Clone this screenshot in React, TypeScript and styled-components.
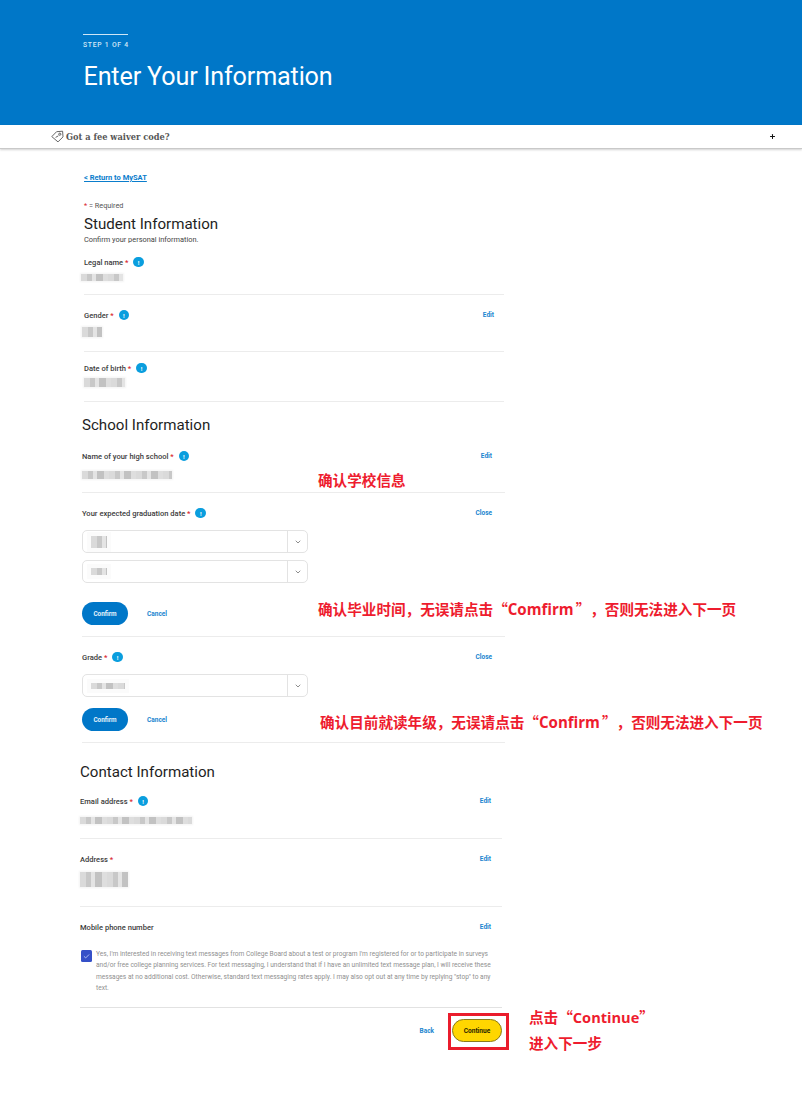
import React from 'react';
import styled, { createGlobalStyle } from 'styled-components';
import { ChevronDown, Check, Plus } from 'lucide-react';

const GlobalStyle = createGlobalStyle`
  html, body {
    margin: 0;
    padding: 0;
    background: #ffffff;
    font-family: Roboto, "Liberation Sans", sans-serif;
  }
  * {
    box-sizing: border-box;
  }
`;

const Page = styled.div`
  position: relative;
  width: 802px;
  height: 1094px;
  overflow: hidden;
  background: #ffffff;
`;

const Hero = styled.header`
  height: 125px;
  padding: 34px 0 0 83px;
  background: #0077c8;
  color: #ffffff;
`;

const StepLabel = styled.div`
  width: 45px;
  padding-top: 6px;
  border-top: 1px solid #cfe6f6;
  font-size: 6.8px;
  line-height: 8px;
  font-weight: 500;
  letter-spacing: 0.75px;
  white-space: nowrap;
  color: #d3e8f7;
`;

const HeroTitle = styled.h1`
  margin: 12px 0 0 0.5px;
  font-size: 25.15px;
  line-height: 32px;
  font-weight: 400;
  letter-spacing: -0.15px;
  white-space: nowrap;
`;

const FeeBar = styled.div`
  display: flex;
  align-items: center;
  justify-content: space-between;
  height: 24px;
  padding: 0 26px 0 51px;
  border-bottom: 1px solid #c9c9c9;
  box-shadow: 0 1px 2px rgba(0, 0, 0, 0.18);
`;

const FeeTitle = styled.div`
  display: flex;
  align-items: center;
  gap: 2px;
  font-family: "DejaVu Serif", serif;
  font-size: 8.25px;
  font-weight: 700;
  color: #565656;
`;

const Main = styled.main`
  padding-top: 24px;
`;

const Intro = styled.div`
  padding-left: 84px;
`;

const ReturnLink = styled.a`
  display: block;
  font-size: 7.5px;
  line-height: 10px;
  font-weight: 700;
  color: #0a7dcc;
  text-decoration: underline;
`;

const Required = styled.div`
  margin-top: 18px;
  font-size: 7.3px;
  line-height: 10px;
  color: #555555;
`;

const Star = styled.span`
  color: #d8232a;
`;

const Heading = styled.h2<{ $top?: number }>`
  margin: ${({ $top }) => $top ?? 0}px 0 0;
  padding-bottom: 2px;
  font-size: 15.1px;
  line-height: 18px;
  font-weight: 400;
  color: #1e1e1e;
`;

const Subheading = styled.div`
  font-size: 7.4px;
  line-height: 10px;
  color: #444444;
`;

const Section = styled.section<{ $left: number; $width: number; $inset: number }>`
  --head-inset: ${({ $inset }) => $inset}px;
  margin-left: ${({ $left }) => $left}px;
  width: ${({ $width }) => $width}px;
`;

const Field = styled.div<{ $height: number; $top: number; $plain?: boolean }>`
  height: ${({ $height }) => $height}px;
  padding-top: ${({ $top }) => $top}px;
  border-bottom: ${({ $plain }) => ($plain ? 'none' : '1px solid #ececec')};
`;

const FieldHead = styled.div`
  display: flex;
  align-items: center;
  justify-content: space-between;
  height: 12px;
  padding-right: var(--head-inset);
`;

const LabelGroup = styled.div`
  display: flex;
  align-items: center;
  gap: 5px;
`;

const Label = styled.span`
  font-size: 7.55px;
  font-weight: 500;
  white-space: nowrap;
  color: #3c3c3c;
`;

const InfoDot = styled.span`
  display: flex;
  align-items: center;
  justify-content: center;
  width: 10.5px;
  height: 10.5px;
  border-radius: 50%;
  background: #0a9ede;
  font-size: 6px;
  font-weight: 700;
  color: #ffffff;
`;

const TextLink = styled.a`
  font-size: 6.5px;
  font-weight: 700;
  color: #1a85cf;
`;

const Redacted = styled.div<{ $width: number; $height: number; $top: number; $left?: number; $halo?: boolean }>`
  width: ${({ $width }) => $width}px;
  height: ${({ $height }) => $height}px;
  margin: ${({ $top }) => $top}px 0 0 ${({ $left }) => $left ?? 0}px;
  background: repeating-linear-gradient(
    90deg,
    #dadada 0 6px,
    #c8c8c8 6px 11px,
    #e4e4e4 11px 15px,
    #c2c2c2 15px 22px,
    #dedede 22px 27px
  );
  box-shadow: ${({ $halo }) => ($halo ? '0 0 0 4px #fbfbfb' : '0 0 2px 1px #f3f3f3')};
  filter: blur(0.7px);
`;

const SelectBox = styled.div<{ $top?: number }>`
  display: flex;
  align-items: center;
  width: 226px;
  height: 23px;
  margin-top: ${({ $top }) => $top ?? 0}px;
  border: 1px solid #e3e3e3;
  border-radius: 5px;
`;

const SelectValue = styled.div`
  flex: 1;
  padding-left: 8px;
`;

const SelectArrow = styled.div`
  display: flex;
  align-items: center;
  justify-content: center;
  width: 20px;
  height: 100%;
  border-left: 1px solid #e3e3e3;
  color: #555555;
`;

const Actions = styled.div<{ $top: number }>`
  display: flex;
  align-items: center;
  gap: 19px;
  margin-top: ${({ $top }) => $top}px;
`;

const ConfirmButton = styled.button`
  width: 46px;
  height: 23px;
  padding: 0;
  border: none;
  border-radius: 12px;
  background: #0077c8;
  font-family: inherit;
  font-size: 6.4px;
  font-weight: 700;
  color: #e4f2fb;
`;

const Consent = styled.div`
  display: flex;
  gap: 4px;
`;

const CheckBox = styled.span`
  flex: none;
  display: flex;
  align-items: center;
  justify-content: center;
  width: 11px;
  height: 12px;
  margin: 1px 0 0 1px;
  border-radius: 1.5px;
  background: #3550c8;
  color: #dfe6ff;
`;

const ConsentText = styled.p`
  margin: 0;
  width: 397px;
  font-size: 6.6px;
  line-height: 11.3px;
  color: #8f8f8f;
`;

const Divider = styled.div`
  margin-top: 13px;
  border-top: 1px solid #e2e2e2;
`;

const Footer = styled.div`
  display: flex;
  align-items: center;
  justify-content: flex-end;
  gap: 18px;
  margin-top: 11px;
`;

const ContinueButton = styled.button`
  width: 50px;
  height: 23px;
  padding: 0;
  border: 1px solid #8a7a1a;
  border-radius: 12px;
  background: #ffd600;
  font-family: inherit;
  font-size: 6.6px;
  font-weight: 700;
  color: #2a2600;
`;

const Highlight = styled.div`
  position: absolute;
  top: 1013px;
  left: 448px;
  width: 61px;
  height: 37px;
  border: 3px solid #ea1c2c;
`;

const Note = styled.div<{ $x: number; $y: number }>`
  position: absolute;
  left: ${({ $x }) => $x}px;
  top: ${({ $y }) => $y}px;
  font-family: "Noto Sans CJK SC", "Noto Sans", sans-serif;
  font-size: 14.6px;
  line-height: 20px;
  font-weight: 700;
  white-space: nowrap;
  text-spacing-trim: space-all;
  color: #ee1c2e;
`;

const NoteLatin = styled.span<{ $size: number; $gap: number }>`
  margin-right: ${({ $gap }) => $gap}px;
  font-family: "Open Sans", sans-serif;
  font-size: ${({ $size }) => $size}px;
`;

const TagIcon = () => (
  <svg width="13" height="13" viewBox="0 0 13 13" fill="none" stroke="#555555" strokeWidth="0.9">
    <path d="M0.8 6.6 L5.6 1.7 L11.6 1.2 L12 6.9 L7 11.9 Z" strokeLinejoin="round" />
    <circle cx="8.8" cy="4.2" r="1.1" />
    <path d="M4.6 7.4 L7.4 5.8" />
  </svg>
);

const FieldLabel = ({ text, required = true, info = true }: { text: string; required?: boolean; info?: boolean }) => (
  <LabelGroup>
    <Label>
      {text}
      {required && <Star> *</Star>}
    </Label>
    {info && <InfoDot>!</InfoDot>}
  </LabelGroup>
);

const Select = ({ top, width, height }: { top?: number; width: number; height: number }) => (
  <SelectBox $top={top}>
    <SelectValue>
      <Redacted $width={width} $height={height} $top={0} $halo />
    </SelectValue>
    <SelectArrow>
      <ChevronDown size={8} strokeWidth={2} />
    </SelectArrow>
  </SelectBox>
);

export default function App() {
  return (
    <Page>
      <GlobalStyle />
      <Hero>
        <StepLabel>STEP 1 OF 4</StepLabel>
        <HeroTitle>Enter Your Information</HeroTitle>
      </Hero>
      <FeeBar>
        <FeeTitle>
          <TagIcon />
          Got a fee waiver code?
        </FeeTitle>
        <Plus size={7} strokeWidth={3.5} color="#111111" />
      </FeeBar>
      <Main>
        <Intro>
          <ReturnLink>&lt; Return to MySAT</ReturnLink>
          <Required>
            <Star>*</Star> = Required
          </Required>
          <Heading $top={4}>Student Information</Heading>
          <Subheading>Confirm your personal information.</Subheading>
        </Intro>

        <Section $left={84} $width={420} $inset={10}>
          <Field $height={50} $top={11}>
            <FieldHead>
              <FieldLabel text="Legal name" />
            </FieldHead>
            <Redacted $width={42} $height={7} $top={6} $left={-3} />
          </Field>
          <Field $height={57} $top={14}>
            <FieldHead>
              <FieldLabel text="Gender" />
              <TextLink>Edit</TextLink>
            </FieldHead>
            <Redacted $width={20} $height={10} $top={6} $left={-2} />
          </Field>
          <Field $height={50} $top={10}>
            <FieldHead>
              <FieldLabel text="Date of birth" />
            </FieldHead>
            <Redacted $width={41} $height={9} $top={4} />
          </Field>
        </Section>

        <Section $left={82} $width={423} $inset={13}>
          <Heading $top={14}>School Information</Heading>
          <Field $height={57} $top={14}>
            <FieldHead>
              <FieldLabel text="Name of your high school" />
              <TextLink>Edit</TextLink>
            </FieldHead>
            <Redacted $width={90} $height={8} $top={9} />
          </Field>
          <Field $height={144} $top={14}>
            <FieldHead>
              <FieldLabel text="Your expected graduation date" />
              <TextLink>Close</TextLink>
            </FieldHead>
            <Select top={11} width={16} height={12} />
            <Select top={7} width={16} height={7} />
            <Actions $top={19}>
              <ConfirmButton>Confirm</ConfirmButton>
              <TextLink>Cancel</TextLink>
            </Actions>
          </Field>
          <Field $height={106} $top={14}>
            <FieldHead>
              <FieldLabel text="Grade" />
              <TextLink>Close</TextLink>
            </FieldHead>
            <Select top={11} width={34} height={6} />
            <Actions $top={11}>
              <ConfirmButton>Confirm</ConfirmButton>
              <TextLink>Cancel</TextLink>
            </Actions>
          </Field>
        </Section>

        <Section $left={80} $width={422} $inset={11}>
          <Heading $top={20}>Contact Information</Heading>
          <Field $height={56} $top={12}>
            <FieldHead>
              <FieldLabel text="Email address" />
              <TextLink>Edit</TextLink>
            </FieldHead>
            <Redacted $width={112} $height={7} $top={10} />
          </Field>
          <Field $height={68} $top={14}>
            <FieldHead>
              <FieldLabel text="Address" info={false} />
              <TextLink>Edit</TextLink>
            </FieldHead>
            <Redacted $width={48} $height={15} $top={7} />
          </Field>
          <Field $height={42} $top={14} $plain>
            <FieldHead>
              <FieldLabel text="Mobile phone number" required={false} info={false} />
              <TextLink>Edit</TextLink>
            </FieldHead>
          </Field>
          <Consent>
            <CheckBox>
              <Check size={7} strokeWidth={2.5} />
            </CheckBox>
            <ConsentText>
              Yes, I'm interested in receiving text messages from College Board about a test or program I'm registered
              for or to participate in surveys and/or free college planning services. For text messaging, I understand
              that if I have an unlimited text message plan, I will receive these messages at no additional cost.
              Otherwise, standard text messaging rates apply. I may also opt out at any time by replying "stop" to any
              text.
            </ConsentText>
          </Consent>
          <Divider />
          <Footer>
            <TextLink>Back</TextLink>
            <ContinueButton>Continue</ContinueButton>
          </Footer>
        </Section>
      </Main>

      <Note $x={318} $y={470}>确认学校信息</Note>
      <Note $x={318} $y={599}>
        确认毕业时间，无误请点击“<NoteLatin $size={15.1} $gap={2}>Comfirm</NoteLatin>”，否则无法进入下一页
      </Note>
      <Note $x={320} $y={712}>
        确认目前就读年级，无误请点击“<NoteLatin $size={15.1} $gap={2}>Confirm</NoteLatin>”，否则无法进入下一页
      </Note>
      <Highlight />
      <Note $x={529} $y={1007}>
        点击“<NoteLatin $size={14.6} $gap={0}>Continue</NoteLatin>”
      </Note>
      <Note $x={529} $y={1033}>进入下一步</Note>
    </Page>
  );
}
